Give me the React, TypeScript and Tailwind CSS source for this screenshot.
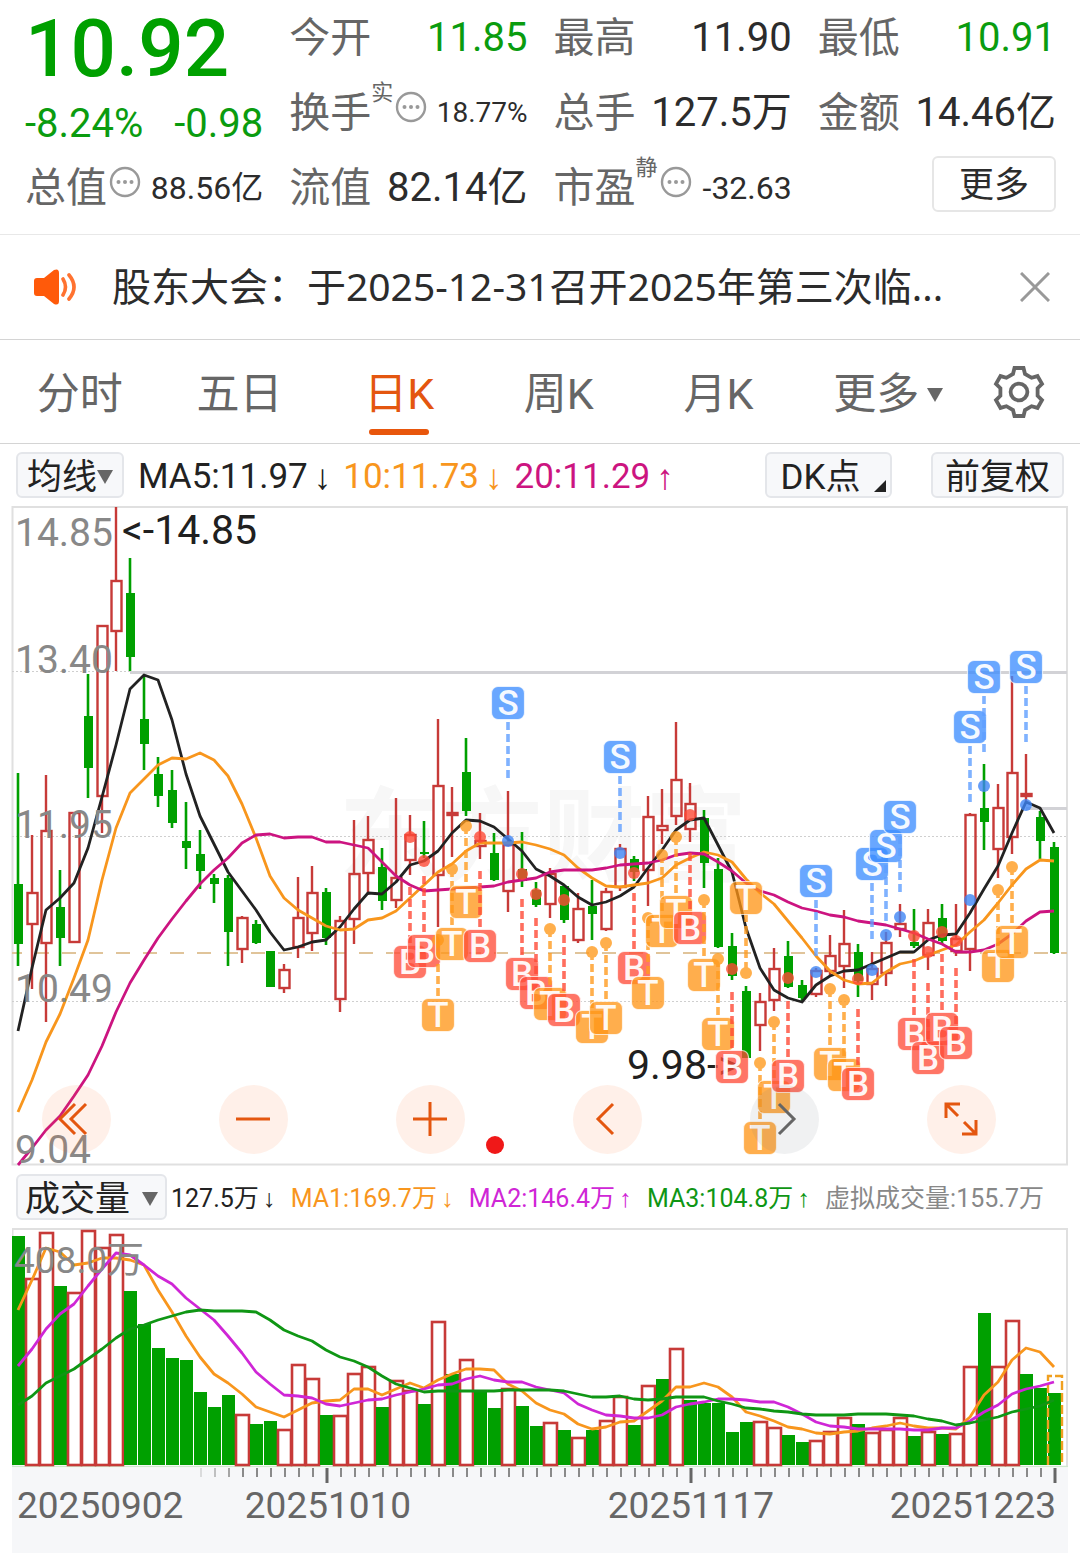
import React from "react";

const FONT = "font-['Roboto','Noto_Sans_CJK_SC',sans-serif]";
const RED = "#c73a38";
const GREEN = "#00a000";

type Candle = ["r" | "g", number, number, number, number];

// kind, wick top, body top, body bottom, wick bottom
const candles: Candle[] = [
  ["g", 773, 884, 944, 966], ["r", 835, 892, 925, 989], ["r", 775, 830, 944, 1022], ["g", 870, 907, 938, 966],
  ["r", 812, 812, 943, 943], ["g", 674, 716, 768, 798], ["r", 625, 625, 797, 833], ["r", 507, 580, 632, 671],
  ["g", 558, 593, 657, 671], ["g", 676, 719, 744, 770], ["g", 757, 774, 796, 807], ["g", 770, 790, 823, 828],
  ["g", 802, 841, 848, 869], ["g", 830, 854, 871, 889], ["g", 874, 878, 884, 903], ["g", 875, 878, 932, 966],
  ["r", 916, 917, 950, 963], ["g", 920, 924, 943, 944], ["g", 951, 951, 987, 987], ["r", 964, 969, 989, 993],
  ["r", 877, 917, 948, 958], ["r", 866, 892, 934, 951], ["g", 888, 892, 938, 945], ["r", 916, 920, 1000, 1012],
  ["r", 820, 873, 920, 944], ["r", 816, 839, 874, 895], ["g", 848, 867, 901, 910], ["r", 798, 877, 901, 908],
  ["r", 815, 834, 861, 875], ["g", 821, 852, 854, 858], ["r", 719, 785, 876, 927], ["r", 787, 812, 816, 857],
  ["g", 738, 772, 811, 816], ["r", 813, 840, 847, 859], ["g", 833, 853, 880, 881], ["r", 791, 844, 892, 912],
  ["g", 832, 869, 881, 887], ["g", 882, 890, 905, 907], ["r", 868, 873, 905, 918], ["g", 885, 886, 920, 923],
  ["r", 893, 908, 941, 943], ["g", 880, 906, 914, 940], ["r", 888, 891, 930, 931], ["r", 844, 848, 888, 891],
  ["g", 856, 859, 872, 881], ["r", 796, 816, 871, 906], ["r", 789, 825, 831, 844], ["r", 722, 779, 817, 825],
  ["r", 783, 803, 830, 842], ["g", 810, 818, 863, 888], ["g", 858, 869, 947, 948], ["g", 933, 946, 976, 980],
  ["g", 986, 991, 1058, 1058], ["r", 993, 1001, 1026, 1051], ["r", 948, 968, 1001, 1011], ["g", 941, 956, 987, 988],
  ["g", 980, 985, 998, 1002], ["r", 968, 970, 995, 997], ["r", 935, 955, 972, 975], ["r", 910, 943, 967, 988],
  ["g", 944, 952, 981, 997], ["r", 952, 968, 985, 1000], ["r", 932, 942, 974, 986], ["r", 904, 923, 930, 937],
  ["g", 909, 942, 946, 948], ["r", 909, 922, 956, 970], ["g", 904, 918, 941, 944], ["r", 904, 938, 952, 956],
  ["r", 813, 814, 950, 971], ["g", 764, 808, 822, 850], ["r", 784, 807, 850, 878], ["r", 676, 772, 838, 854],
  ["r", 754, 793, 797, 802], ["g", 811, 817, 841, 859], ["g", 842, 847, 953, 954],
];

const ma5 = [
  1031, 968, 910, 898, 883, 848, 797, 745, 689, 675, 680, 720, 774, 816, 844, 872, 891, 910, 932, 950, 947, 942, 940, 927,
  909, 893, 894, 882, 865, 861, 851, 833, 820, 821, 827, 839, 851, 869, 876, 885, 897, 905, 902, 896, 887, 868, 850, 830,
  820, 818, 845, 872, 928, 968, 990, 998, 1002, 985, 976, 971, 970, 964, 958, 952, 952, 940, 935, 934, 913, 889, 866, 833,
  802, 808, 833,
];
const ma10 = [
  1112, 1080, 1042, 1014, 978, 940, 880, 828, 793, 779, 765, 758, 759, 753, 760, 776, 804, 838, 876, 898, 910, 918, 926,
  930, 929, 920, 918, 911, 898, 885, 872, 864, 851, 843, 843, 843, 842, 845, 849, 855, 868, 878, 886, 887, 885, 883, 878,
  865, 858, 852, 855, 862, 879, 893, 904, 921, 938, 956, 971, 980, 984, 983, 972, 964, 961, 955, 950, 945, 932, 920, 903,
  885, 869, 860, 861,
];
const ma20 = [
  1165, 1148, 1130, 1116, 1096, 1075, 1046, 1012, 983, 960, 938, 919, 901, 884, 870, 858, 843, 835, 834, 838, 837, 837,
  842, 842, 845, 848, 862, 876, 885, 891, 890, 889, 888, 887, 886, 882, 880, 878, 872, 870, 870, 870, 868, 865, 864, 863,
  860, 855, 853, 854, 862, 871, 883, 891, 895, 902, 908, 911, 915, 917, 921, 923, 925, 929, 933, 939, 944, 952, 952, 950,
  944, 934, 921, 912, 911,
];

type Mark = ["S" | "B" | "T", number, number, number];

// letter, day index, badge centre, dot centre
const marks: Mark[] = [
  ["B", 28, 962, 837], ["B", 29, 951, 861], ["T", 30, 1015, 940], ["T", 31, 944, 869], ["T", 32, 902, 826],
  ["B", 33, 946, 837], ["S", 35, 703, 841], ["B", 36, 974, 874], ["B", 37, 993, 894], ["T", 38, 1004, 929],
  ["B", 39, 1010, 900], ["T", 41, 1027, 952], ["T", 42, 1018, 943], ["S", 43, 757, 853], ["B", 44, 968, 873],
  ["T", 45, 993, 918], ["T", 46, 931, 855], ["T", 47, 912, 837], ["B", 48, 928, 815], ["T", 49, 975, 900],
  ["T", 50, 1034, 959], ["B", 51, 1067, 969], ["T", 52, 898, 973], ["T", 53, 1138, 1063], ["T", 54, 1097, 1022],
  ["B", 55, 1076, 978], ["S", 57, 881, 972], ["T", 58, 1064, 989], ["T", 59, 1075, 1000], ["B", 60, 1084, 979],
  ["S", 61, 864, 970], ["S", 62, 846, 935], ["S", 63, 817, 917], ["B", 64, 1034, 936], ["B", 65, 1058, 952],
  ["B", 66, 1029, 932], ["B", 67, 1043, 941], ["S", 68, 727, 900], ["S", 69, 677, 786], ["T", 70, 966, 890],
  ["T", 71, 942, 867], ["S", 72, 667, 805],
];

const volTops = [
  1236, 1278, 1232, 1286, 1292, 1230, 1247, 1234, 1291, 1324, 1348, 1358, 1360, 1392, 1407, 1395, 1414, 1424, 1421, 1429,
  1364, 1378, 1415, 1415, 1373, 1366, 1407, 1380, 1390, 1404, 1321, 1374, 1359, 1391, 1408, 1388, 1406, 1426, 1422, 1430,
  1437, 1430, 1420, 1396, 1425, 1385, 1379, 1348, 1400, 1403, 1403, 1432, 1422, 1421, 1427, 1435, 1442, 1440, 1431, 1417,
  1424, 1432, 1429, 1417, 1436, 1431, 1434, 1433, 1366, 1313, 1366, 1320, 1374, 1388, 1393,
];
// days whose volume bar takes the opposite colour of the candle above it
const flipped = new Set([5, 31, 32, 33, 46, 48, 72]);
const vol1 = [
  1310, 1280, 1248, 1252, 1265, 1263, 1258, 1258, 1260, 1265, 1290, 1312, 1336, 1357, 1374, 1383, 1394, 1407, 1412, 1417,
  1410, 1403, 1401, 1400, 1389, 1389, 1395, 1389, 1383, 1388, 1380, 1374, 1369, 1369, 1370, 1384, 1391, 1403, 1410, 1414,
  1424, 1429, 1427, 1422, 1421, 1411, 1401, 1387, 1387, 1383, 1387, 1397, 1412, 1416, 1421, 1427, 1429, 1433, 1434, 1432,
  1431, 1428, 1426, 1423, 1426, 1428, 1428, 1429, 1417, 1395, 1382, 1360, 1348, 1352, 1367,
];
const vol2 = [
  1366, 1349, 1329, 1314, 1304, 1286, 1269, 1253, 1255, 1265, 1276, 1284, 1298, 1309, 1320, 1336, 1353, 1372, 1384, 1395,
  1396, 1398, 1404, 1406, 1403, 1400, 1399, 1395, 1392, 1389, 1385, 1384, 1379, 1376, 1380, 1382, 1382, 1387, 1390, 1393,
  1404, 1410, 1415, 1416, 1418, 1418, 1415, 1407, 1404, 1402, 1399, 1399, 1400, 1402, 1402, 1407, 1414, 1422, 1426, 1427,
  1429, 1429, 1429, 1429, 1430, 1430, 1428, 1428, 1421, 1412, 1405, 1394, 1389, 1386, 1382,
];
const vol3 = [
  1405, 1396, 1383, 1376, 1369, 1359, 1349, 1338, 1329, 1325, 1320, 1316, 1312, 1310, 1311, 1311, 1311, 1312, 1320, 1330,
  1336, 1341, 1350, 1357, 1361, 1367, 1376, 1384, 1388, 1392, 1391, 1391, 1391, 1391, 1391, 1390, 1390, 1390, 1390, 1391,
  1394, 1397, 1397, 1396, 1399, 1400, 1399, 1397, 1397, 1397, 1401, 1404, 1408, 1409, 1411, 1412, 1414, 1415, 1415, 1415,
  1414, 1414, 1414, 1415, 1416, 1419, 1421, 1425, 1423, 1420, 1417, 1412, 1409, 1406, 1400,
];

const dayX = (i: number) => 18 + 14 * i;
const points = (ys: number[]) => ys.map((y, i) => `${dayX(i)},${y}`).join(" ");

function Line({ ys, color }: { ys: number[]; color: string }) {
  return <polyline points={points(ys)} fill="none" stroke={color} strokeWidth="2.8" strokeLinejoin="round" />;
}

function MarkLine({ mark }: { mark: Mark }) {
  const [kind, day, cy, dot] = mark;
  const x = dayX(day);
  const color = kind === "S" ? "#609fff" : kind === "B" ? "#ff4a36" : "#ff9c20";
  let from = cy + 19;
  let to = cy + 75;
  if (kind === "B") {
    from = cy - 75;
    to = cy - 17;
  }
  if (kind === "T") {
    from = Math.min(dot, cy + 16);
    to = dot < cy ? cy - 16 : dot;
  }
  return (
    <g opacity="0.8">
      <line x1={x} x2={x} y1={from} y2={to} stroke={color} strokeWidth="3.6" strokeDasharray="8 4" />
      <circle cx={x} cy={dot} r="6" fill={kind === "S" ? "#3f85f5" : color} />
    </g>
  );
}

function Badge({ mark }: { mark: Mark }) {
  const [kind, day, cy] = mark;
  const x = dayX(day);
  const color = kind === "S" ? "#3a8bff" : kind === "B" ? "#ff4a36" : "#ff9415";
  return (
    <g>
      <rect x={x - 16.5} y={cy - 16.5} width="33" height="33" rx="6.5" fill={color} fillOpacity="0.76" stroke="#fff" strokeOpacity="0.7" strokeWidth="1.2" />
      <text x={x} y={cy + 12} textAnchor="middle" className="text-[35px] font-medium" fill="#fff" fillOpacity="0.95">
        {kind}
      </text>
    </g>
  );
}

function PriceChart() {
  return (
    <svg viewBox="12 506 1056 660" className={`block w-full overflow-visible ${FONT}`} role="img" aria-label="日K线图">
      <text x="543" y="873" textAnchor="middle" className="text-[102px] font-bold" fill="#f7f7f7">
        东方财富
      </text>
      <rect x="12.5" y="507" width="1054.5" height="657.5" fill="none" stroke="#e0e0e0" strokeWidth="2" />
      {[671.5, 836.5, 1001.5].map((y) => (
        <line key={y} x1="12" x2="1067" y1={y} y2={y} stroke="#cfcfcf" strokeWidth="1.2" strokeDasharray="2 2" />
      ))}
      <path d="M130 672.5H1067M1026 808.5H1067" stroke="#d2d2d6" strokeWidth="3" />
      <line x1="12" x2="1067" y1="953" y2="953" stroke="#e0c49a" strokeWidth="2" strokeDasharray="14 13" strokeDashoffset="4" />
      {candles.map(([kind, high, top, bottom, low], i) => {
        const x = dayX(i);
        return kind === "g" ? (
          <g key={i}>
            <line x1={x} x2={x} y1={high} y2={low} stroke={GREEN} strokeWidth="2.6" />
            <rect x={x - 4} y={top} width="9" height={bottom - top} fill={GREEN} />
          </g>
        ) : (
          <g key={i} fill="none" stroke={RED} strokeWidth="2.4">
            <path d={`M${x} ${high}V${top}M${x} ${bottom}V${low}`} />
            <rect x={x - 4.5} y={top + 1} width="10" height={bottom - top - 2} />
          </g>
        );
      })}
      <g fill="#202020" className="text-[41px]">
        <text x="122" y="544">&lt;-14.85</text>
        <text x="627" y="1079">9.98-&gt;</text>
      </g>
      <Line ys={ma5} color="#222" />
      <Line ys={ma10} color="#f8961d" />
      <Line ys={ma20} color="#cc1480" />
      {marks.map((m) => (
        <React.Fragment key={m[1]}>
          <MarkLine mark={m} />
          <Badge mark={m} />
        </React.Fragment>
      ))}
      <circle cx="495" cy="1145" r="9" fill="#f01818" />
      <g fill="#888" className="text-[39px]">
        <text x="15" y="546">14.85</text>
        <text x="15" y="673">13.40</text>
        <text x="15" y="838">11.95</text>
        <text x="15" y="1002">10.49</text>
        <text x="15" y="1163">9.04</text>
      </g>
    </svg>
  );
}

function VolumeChart() {
  return (
    <svg viewBox="12 1228 1056 240" className={`block w-full ${FONT}`} role="img" aria-label="成交量图">
      <path d="M12.5 1466V1229H1067V1466" fill="none" stroke="#e0e0e0" strokeWidth="2" />
      <path d="M12 1466.5H1068" stroke="#cfe6cf" strokeWidth="1.5" />
      {volTops.map((top, i) => {
        const x = dayX(i);
        const green = (candles[i][0] === "g") !== flipped.has(i);
        return green ? (
          <rect key={i} x={x - 6} y={top} width="13" height={1465 - top} fill={GREEN} />
        ) : (
          <rect key={i} x={x - 6} y={top + 1} width="13" height={1464 - top} fill="#fff" stroke={RED} strokeWidth="2.6" />
        );
      })}
      <path d="M1048 1465V1376H1062V1465" fill="none" stroke="#f0a020" strokeWidth="2.4" strokeDasharray="9 3" />
      <Line ys={vol1} color="#f8961d" />
      <Line ys={vol2} color="#cf26d6" />
      <Line ys={vol3} color="#0f9614" />
      <text x="14" y="1273" fill="#888" className="text-[37px]">408.0万</text>
    </svg>
  );
}

function DateAxis() {
  const days = candles.map((_, i) => i).filter((i) => i >= 13);
  return (
    <svg viewBox="12 1468 1056 85" className={`block w-full bg-[#f6f7f9] ${FONT}`} role="img" aria-label="日期">
      {days.map((i) => {
        const major = i === 22 || i === 48 || i === 74;
        return (
          <line key={i} x1={dayX(i) + 1} x2={dayX(i) + 1} y1="1468" y2={major ? 1483 : 1477}
            stroke={major ? "#666" : "#8a8a8a"} strokeWidth={major ? 3 : 2} opacity={i < 16 ? (i - 12) / 4 : 1} />
        );
      })}
      <g fill="#666" className="text-[37px]">
        <text x="17" y="1518">20250902</text>
        <text x="328" y="1518" textAnchor="middle">20251010</text>
        <text x="691" y="1518" textAnchor="middle">20251117</text>
        <text x="1056" y="1518" textAnchor="end">20251223</text>
      </g>
    </svg>
  );
}

function InfoIcon() {
  return (
    <svg viewBox="0 0 32 32" className="mx-0.5 mb-3.5 size-8 shrink-0" aria-hidden="true">
      <circle cx="16" cy="16" r="14" fill="none" stroke="#999" strokeWidth="2.4" />
      <g fill="#999">
        <circle cx="9.5" cy="16" r="2" />
        <circle cx="16" cy="16" r="2" />
        <circle cx="22.5" cy="16" r="2" />
      </g>
    </svg>
  );
}

type StatProps = { label: string; value: string; green?: boolean; small?: boolean; sup?: string };

function Stat({ label, value, green, small, sup }: StatProps) {
  return (
    <div className="flex h-[75px] items-center justify-between whitespace-nowrap">
      <dt className="flex items-center pt-[3px] text-[41px] text-[#666]">
        {label}
        {sup && <sup className="top-0 self-start text-[22px] leading-5">{sup}</sup>}
        {small && <InfoIcon />}
      </dt>
      <dd className={`${small ? (sup === "实" ? "text-[28px]" : "text-[32px]") : "text-[40px]"} ${green ? "text-[#0a9c0f]" : "text-[#2c2c2c]"}`}>
        {value}
      </dd>
    </div>
  );
}

function Header() {
  return (
    <header className="grid h-[235px] grid-cols-4 gap-x-[26px] border-b border-[#e8e8e8] pr-6 pl-[25px]">
      <dl>
        <div className="flex h-[97px] items-center text-[80px] font-medium leading-none text-[#00a000]">10.92</div>
        <div className="flex h-[53px] items-center justify-between text-[40px] text-[#0a9c0f]">
          <span>-8.24%</span>
          <span>-0.98</span>
        </div>
        <Stat label="总值" value="88.56亿" small />
      </dl>
      <dl>
        <Stat label="今开" value="11.85" green />
        <Stat label="换手" value="18.77%" small sup="实" />
        <Stat label="流值" value="82.14亿" />
      </dl>
      <dl>
        <Stat label="最高" value="11.90" />
        <Stat label="总手" value="127.5万" />
        <Stat label="市盈" value="-32.63" small sup="静" />
      </dl>
      <div>
        <dl>
          <Stat label="最低" value="10.91" green />
          <Stat label="金额" value="14.46亿" />
        </dl>
        <div className="flex h-[68px] items-center justify-end">
          <button className="h-14 w-[124px] rounded-md border-2 border-[#e6e6e6] pt-0.5 text-[35px] leading-none text-[#2c2c2c]">更多</button>
        </div>
      </div>
    </header>
  );
}

function Notice() {
  return (
    <section className="flex h-[105px] items-center border-b border-[#d4d4d4] pr-7 pl-8 text-[39px] text-[#2c2c2c]">
      <svg viewBox="0 0 48 40" className="h-10 w-12 shrink-0" aria-hidden="true">
        <path d="M5 11H12L22 3Q27 1 27 6V34Q27 39 22 37L12 29H5Q2 29 2 26V14Q2 11 5 11Z" fill="#ff5a0a" />
        <path d="M31 12Q36 20 31 28M37 8Q47 20 37 32" fill="none" stroke="#ff7230" strokeWidth="3.6" strokeLinecap="round" />
      </svg>
      <a href="#notice" className="ml-8 flex-1 pb-1 font-['Noto_Sans','Noto_Sans_CJK_SC',sans-serif] leading-none whitespace-nowrap">
        股东大会：于2025-12-31召开2025年第三次临...
      </a>
      <button aria-label="关闭" className="px-0.5">
        <svg viewBox="0 0 30 30" className="size-[30px]" fill="none" stroke="#999" strokeWidth="3">
          <path d="M1 1L29 29M29 1L1 29" />
        </svg>
      </button>
    </section>
  );
}

const toothCorners = [[-6, -18], [-4.5, -24], [4.5, -24], [6, -18]];
const gearPoints = [0, 1, 2, 3, 4, 5]
  .flatMap((k) =>
    toothCorners.map(([x, y]) => {
      const a = (k * Math.PI) / 3;
      return `${(x * Math.cos(a) - y * Math.sin(a)).toFixed(1)},${(x * Math.sin(a) + y * Math.cos(a)).toFixed(1)}`;
    }),
  )
  .join(" ");

function Tabs() {
  return (
    <nav className="flex h-[104px] items-center border-b border-[#d4d4d4] text-[43px] leading-none text-[#666]">
      <div className="grid h-full flex-1 grid-cols-6">
        {["分时", "五日", "日K", "周K", "月K", "更多"].map((t) => (
          <button
            key={t}
            className={`flex h-full items-center justify-center gap-2 pt-1.5 whitespace-nowrap ${t === "日K" ? "relative text-[#e4560f]" : ""} ${t === "更多" ? "pl-5" : ""}`}
          >
            {t}
            {t === "更多" && <Triangle />}
            {t === "日K" && <span className="absolute bottom-2 h-1.5 w-[60px] rounded-full bg-[#e8560c]" />}
          </button>
        ))}
      </div>
      <button aria-label="设置" className="flex w-[122px] justify-center">
        <svg viewBox="-27 -27 54 54" className="size-[54px]" fill="none" stroke="#666" strokeWidth="3.8">
          <polygon points={gearPoints} />
          <circle r="8.4" />
        </svg>
      </button>
    </nav>
  );
}

function Triangle() {
  return (
    <svg viewBox="0 0 16 14" className="h-3.5 w-4 shrink-0" aria-hidden="true">
      <path d="M0 0H16L8 14Z" fill="#666" />
    </svg>
  );
}

const chip = "flex h-[46px] items-center justify-center rounded-md border-2 border-[#e4e6ea] bg-[#f7f8fa] pt-1 leading-none text-[#222] whitespace-nowrap";

function Arrow({ up }: { up?: boolean }) {
  return <span className="font-['Liberation_Sans',sans-serif]">{up ? "↑" : "↓"}</span>;
}

function AverageBar() {
  return (
    <div className="flex h-[62px] items-center px-4 text-[35px] leading-none whitespace-nowrap text-[#222]">
      <button className={`${chip} w-[108px]`}>
        均线
        <Triangle />
      </button>
      <div className="ml-3.5 flex gap-3 pt-0.5">
        <span className="flex gap-1.5">MA5:11.97<Arrow /></span>
        <span className="flex gap-1.5 text-[#f8961d]">10:11.73<Arrow /></span>
        <span className="flex gap-1.5 text-[#cc1480]">20:11.29<Arrow up /></span>
      </div>
      <button className={`${chip} relative ml-auto w-[127px] pr-4`}>
        DK点
        <svg viewBox="0 0 12 12" className="absolute right-1 bottom-1 size-3" aria-hidden="true">
          <path d="M12 0V12H0Z" fill="#222" />
        </svg>
      </button>
      <button className={`${chip} ml-[39px] w-[133px]`}>前复权</button>
    </div>
  );
}

const controls = [
  { label: "最早", d: "M-1 -15L-16 0L-1 15M10 -15L-5 0L10 15" },
  { label: "缩小", d: "M-17 0H17" },
  { label: "放大", d: "M-17 0H17M0 -17V17" },
  { label: "向左", d: "M6 -15L-9 0L6 15" },
  { label: "向右", d: "M-5 -15L10 0L-5 15" },
  { label: "全屏", d: "M-15 -1V-15H-1M-15 -15L-3 -3M15 1V15H1M15 15L3 3" },
];

function ChartControls() {
  return (
    <div className="absolute right-[72px] bottom-3 left-[30px] flex justify-between">
      {controls.map(({ label, d }) => (
        <button key={label} aria-label={label} className={`size-[69px] rounded-full ${label === "向右" ? "bg-gray-500/10" : "bg-[#ff6a20]/10"}`}>
          <svg viewBox="-34 -34 69 69" className="size-full" fill="none" stroke={label === "向右" ? "#666" : "#e4560f"} strokeWidth="3">
            <path d={d} />
          </svg>
        </button>
      ))}
    </div>
  );
}

function VolumeBar() {
  return (
    <div className="flex h-[62px] items-center pr-9 pl-4 text-[25px] leading-none whitespace-nowrap text-[#222]">
      <button className={`${chip} mr-1 w-[151px] gap-3 text-[35px]`}>
        成交量
        <Triangle />
      </button>
      <div className="flex flex-1 justify-between pt-0.5">
        <span className="flex gap-1">127.5万<Arrow /></span>
        <span className="flex gap-1 text-[#f8961d]">MA1:169.7万<Arrow /></span>
        <span className="flex gap-1 text-[#cf26d6]">MA2:146.4万<Arrow up /></span>
        <span className="flex gap-1 text-[#0f9614]">MA3:104.8万<Arrow up /></span>
        <span className="text-[#888]">虚拟成交量:155.7万</span>
      </div>
    </div>
  );
}

export default function App() {
  return (
    <main lang="zh-CN" className={`w-full bg-white ${FONT}`}>
      <Header />
      <Notice />
      <Tabs />
      <AverageBar />
      <div className="px-3">
        <div className="relative">
          <PriceChart />
          <ChartControls />
        </div>
      </div>
      <VolumeBar />
      <div className="px-3">
        <VolumeChart />
        <DateAxis />
      </div>
    </main>
  );
}
